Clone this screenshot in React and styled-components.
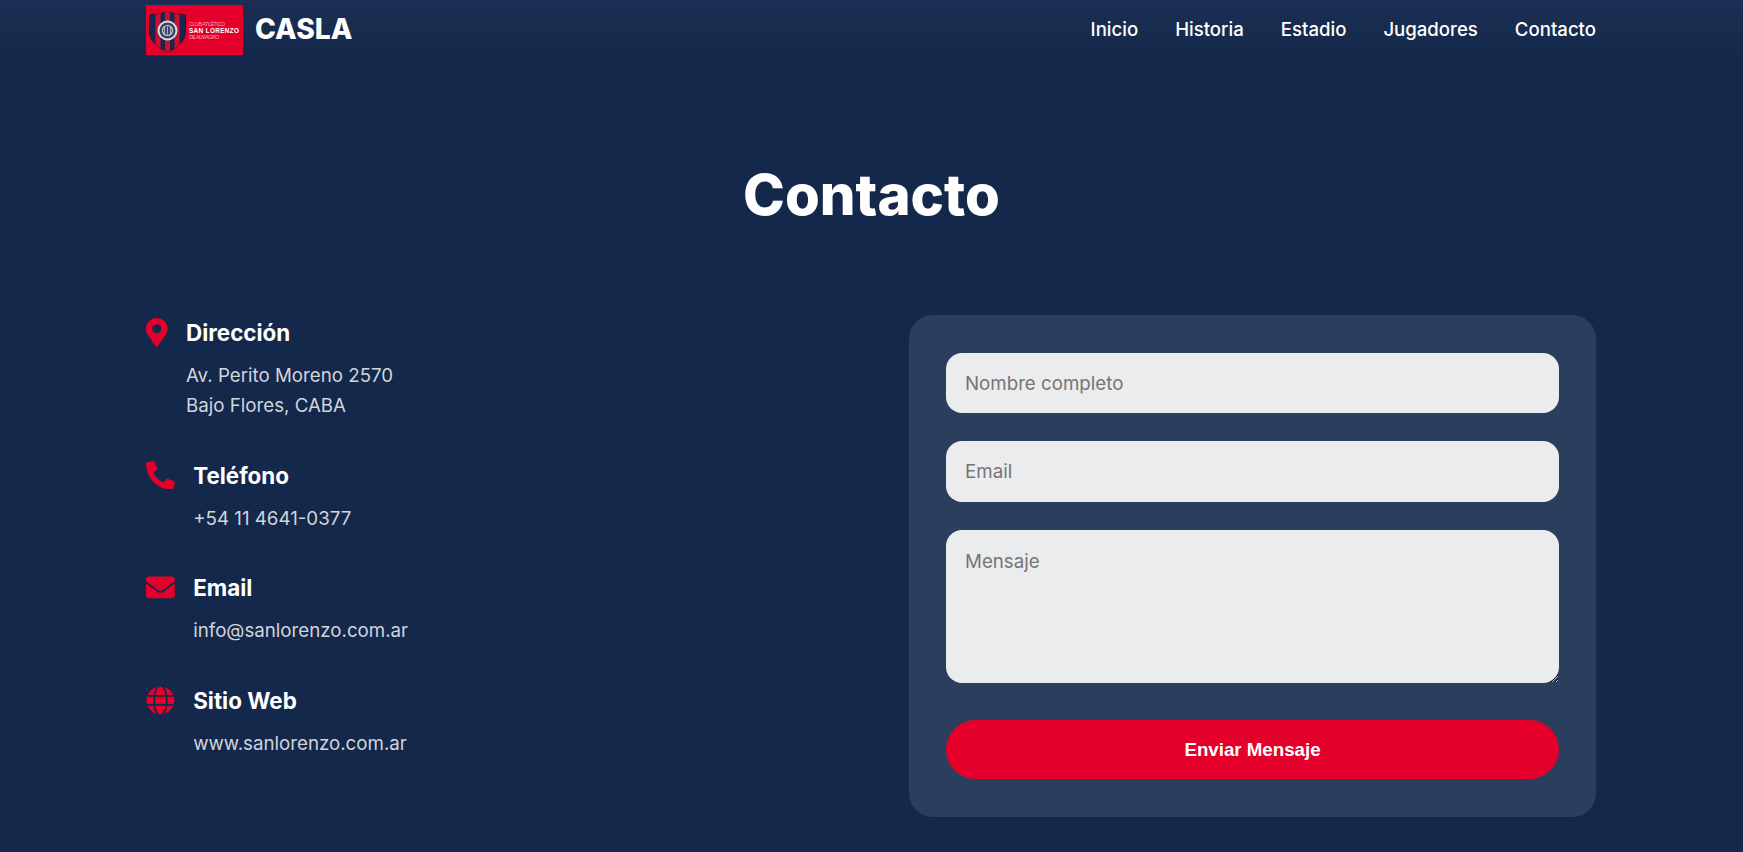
import styled, { createGlobalStyle } from "styled-components";
import { FaMapMarkerAlt, FaPhoneAlt, FaEnvelope, FaGlobe } from "react-icons/fa";

const navLinks = ["Inicio", "Historia", "Estadio", "Jugadores", "Contacto"];

const contactItems = [
  { icon: FaMapMarkerAlt, iconWidth: 21.6, title: "Dirección", lines: ["Av. Perito Moreno 2570", "Bajo Flores, CABA"] },
  { icon: FaPhoneAlt, iconWidth: 28.8, title: "Teléfono", lines: ["+54 11 4641-0377"] },
  { icon: FaEnvelope, iconWidth: 28.8, title: "Email", lines: ["info@sanlorenzo.com.ar"] },
  { icon: FaGlobe, iconWidth: 28.8, title: "Sitio Web", lines: ["www.sanlorenzo.com.ar"] },
];

const shieldPath = "M3.5 10 Q12 9.5 21.5 7 Q31 9.5 39.5 10 L39.5 28 Q38 40 21.5 47 Q5 40 3.5 28 Z";

function ClubLogo() {
  return (
    <LogoBox>
      <svg width="97" height="50" viewBox="0 0 97 50">
        <defs>
          <clipPath id="shield">
            <path d={shieldPath} />
          </clipPath>
        </defs>
        <rect width="97" height="50" fill="#e4002b" />
        <path d={shieldPath} fill="#1c2450" stroke="#3a1030" strokeWidth="1" />
        <g clipPath="url(#shield)">
          <rect x="9.5" y="0" width="5" height="50" fill="#c4122f" />
          <rect x="19" y="0" width="5" height="50" fill="#c4122f" />
          <rect x="28.5" y="0" width="5" height="50" fill="#c4122f" />
        </g>
        <circle cx="21.5" cy="25.5" r="10" fill="#d9dbe2" />
        <circle cx="21.5" cy="25.5" r="8" fill="#3a4464" />
        <circle cx="21.5" cy="25.5" r="5" fill="none" stroke="#c8ccd8" strokeWidth="1.2" />
        <path d="M18.5 21.5 V29.5 M21.5 21.5 V29.5 M24.5 21.5 V29.5" stroke="#c8ccd8" strokeWidth="0.8" />
        <LogoText x="43" y="21" fontSize="5.2" textLength="36" fill="#f7aab5">CLUB ATLÉTICO</LogoText>
        <LogoText x="43" y="27.5" fontSize="6.4" fontWeight="700" textLength="50" fill="#ffffff">SAN LORENZO</LogoText>
        <LogoText x="43" y="34" fontSize="5.2" textLength="30" fill="#f7aab5">DE ALMAGRO</LogoText>
      </svg>
    </LogoBox>
  );
}

export default function App() {
  return (
    <>
      <GlobalStyle />
      <Header>
        <HeaderInner>
          <Brand>
            <ClubLogo />
            <BrandName>CASLA</BrandName>
          </Brand>
          <Nav>
            {navLinks.map((link) => (
              <NavLink key={link} href="#">
                {link}
              </NavLink>
            ))}
          </Nav>
        </HeaderInner>
      </Header>
      <Section>
        <Title>Contacto</Title>
        <Columns>
          <InfoList>
            {contactItems.map(({ icon: Icon, iconWidth, title, lines }) => (
              <InfoItem key={title}>
                <IconWrap $width={iconWidth}>
                  <Icon />
                </IconWrap>
                <InfoBody>
                  <InfoTitle>{title}</InfoTitle>
                  <InfoText>
                    {lines.map((line) => (
                      <span key={line}>{line}</span>
                    ))}
                  </InfoText>
                </InfoBody>
              </InfoItem>
            ))}
          </InfoList>
          <Form onSubmit={(e) => e.preventDefault()}>
            <Input type="text" placeholder="Nombre completo" />
            <Input type="email" placeholder="Email" />
            <TextArea placeholder="Mensaje" />
            <SubmitButton type="submit">Enviar Mensaje</SubmitButton>
          </Form>
        </Columns>
      </Section>
    </>
  );
}

const GlobalStyle = createGlobalStyle`
  * {
    box-sizing: border-box;
  }
  html, body {
    margin: 0;
    background: #14284b;
    color: #fff;
    font-family: Inter, "Liberation Sans", sans-serif;
  }
`;

const Header = styled.header`
  height: 60px;
  background: linear-gradient(180deg, #1a2f53 0%, #14284b 100%);
`;

const HeaderInner = styled.div`
  width: 1451px;
  height: 60px;
  margin: 0 auto;
  padding-right: 1px;
  display: flex;
  align-items: center;
  justify-content: space-between;
`;

const Brand = styled.div`
  display: flex;
  align-items: center;
  gap: 12px;
`;

const LogoBox = styled.div`
  width: 97px;
  height: 50px;
  svg {
    display: block;
  }
`;

const LogoText = styled.text`
  font-family: "Liberation Sans", sans-serif;
`;

const BrandName = styled.span`
  font-size: 28.16px;
  font-weight: 800;
  margin-bottom: 2px;
`;

const Nav = styled.nav`
  display: flex;
  gap: 37px;
  margin-bottom: 3px;
`;

const NavLink = styled.a`
  color: #fff;
  font-size: 18.6px;
  font-weight: 500;
  text-decoration: none;
`;

const Section = styled.section`
  width: 1451px;
  margin: 0 auto;
  padding: 101px 0 35px;
`;

const Title = styled.h2`
  margin: 0 0 86px;
  text-align: center;
  font-size: 56.32px;
  line-height: 68px;
  font-weight: 850;
`;

const Columns = styled.div`
  display: grid;
  grid-template-columns: 1fr 687px;
  padding-right: 1px;
  align-items: start;
`;

const InfoList = styled.div`
  display: flex;
  flex-direction: column;
  gap: 36.4px;
`;

const InfoItem = styled.div`
  display: flex;
  gap: 18.4px;
  align-items: flex-start;
`;

const IconWrap = styled.div`
  display: flex;
  flex: none;
  width: ${(p) => p.$width}px;
  color: #e4002b;
  font-size: 28.8px;
  margin-top: 3px;
  svg {
    width: 100%;
  }
`;

const InfoBody = styled.div`
  display: flex;
  flex-direction: column;
`;

const InfoTitle = styled.h3`
  margin: 0 0 10.4px;
  font-size: 22.4px;
  line-height: 35.84px;
  font-weight: 700;
`;

const InfoText = styled.p`
  margin: 0;
  display: flex;
  flex-direction: column;
  color: #d1d5db;
  font-size: 18.72px;
  line-height: 30px;
`;

const Form = styled.form`
  display: flex;
  flex-direction: column;
  gap: 28.16px;
  padding: 38px 37px;
  background: #2c3e5d;
  border-radius: 24px;
`;

const Input = styled.input`
  height: 60.2px;
  padding: 0 19px;
  border: 0;
  border-radius: 16px;
  background: #ebecee;
  color: #333;
  font: 400 18.72px Inter, sans-serif;
  &::placeholder {
    color: #757575;
  }
`;

const TextArea = styled.textarea`
  display: block;
  height: 153px;
  padding: 18px 19px;
  border: 0;
  border-radius: 16px;
  background: #ebecee;
  font: 400 18.72px/1.5 Inter, sans-serif;
  resize: vertical;
  &::placeholder {
    color: #757575;
  }
`;

const SubmitButton = styled.button`
  height: 59px;
  margin-top: 9.2px;
  border: 0;
  border-radius: 30px;
  background: #e4002b;
  color: #fff;
  font: 700 18.72px "Liberation Sans", Arial, sans-serif;
  cursor: pointer;
`;
